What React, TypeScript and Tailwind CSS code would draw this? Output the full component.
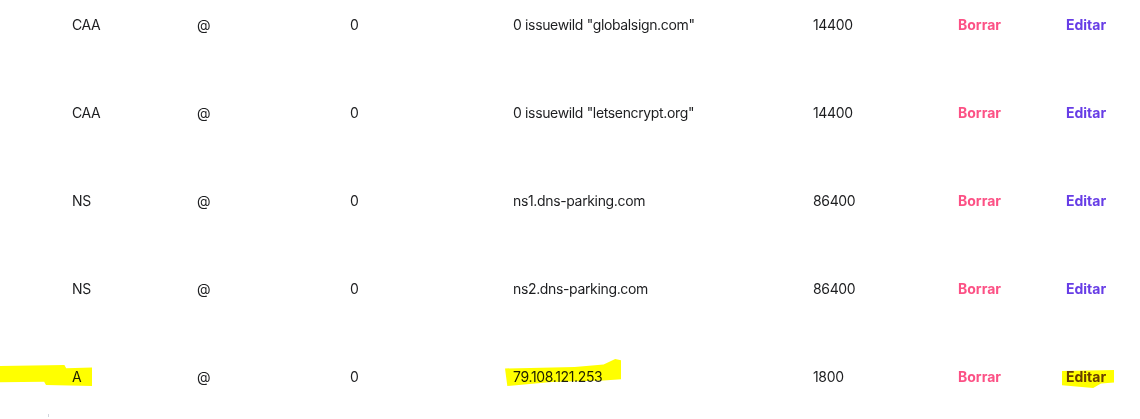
import React from "react";

type DnsRecord = {
  type: string;
  name: string;
  priority: string;
  content: string;
  ttl: string;
};

const records: DnsRecord[] = [
  { type: "CAA", name: "@", priority: "0", content: '0 issuewild "globalsign.com"', ttl: "14400" },
  { type: "CAA", name: "@", priority: "0", content: '0 issuewild "letsencrypt.org"', ttl: "14400" },
  { type: "NS", name: "@", priority: "0", content: "ns1.dns-parking.com", ttl: "86400" },
  { type: "NS", name: "@", priority: "0", content: "ns2.dns-parking.com", ttl: "86400" },
  { type: "A", name: "@", priority: "0", content: "79.108.121.253", ttl: "1800" },
];

const Marker = ({ className, points }: { className: string; points: string }) => (
  <svg className={`pointer-events-none absolute mix-blend-multiply ${className}`} viewBox="0 0 100 100" preserveAspectRatio="none">
    <polygon points={points} fill="#ffff00" />
  </svg>
);

const App = () => {
  return (
    <div className="relative h-[419px] w-[1140px] overflow-hidden bg-white font-['Inter',sans-serif] text-[14px] text-[#1d1e20]">
      <div className="-mt-[20px] flex flex-col">
        {records.map((r, i) => (
          <div
            key={i}
            className="grid h-[88px] grid-cols-[125px_153px_163px_300px_145px_108px_1fr] items-center pl-[72px] tracking-[-0.35px]"
          >
            <span>{r.type}</span>
            <span>{r.name}</span>
            <span>{r.priority}</span>
            <span>{r.content}</span>
            <span>{r.ttl}</span>
            <button className="text-left font-bold tracking-normal text-[#fc5185]">Borrar</button>
            <button className="text-left font-bold tracking-normal text-[#673de6]">Editar</button>
          </div>
        ))}
      </div>

      {/* yellow marker scribbles over the last row */}
      <Marker className="left-0 top-[365px] h-[21px] w-[92px]" points="0,5 70,0 72,15 100,12 100,100 50,95 48,80 0,82" />
      <Marker className="left-[505px] top-[359px] h-[27px] w-[116px]" points="0,35 60,30 85,20 95,0 100,5 100,75 85,80 40,85 2,100" />
      <Marker className="left-[1062px] top-[370px] h-[18px] w-[52px]" points="0,5 100,0 100,70 75,75 60,100 0,85" />

      <span className="absolute left-[48px] top-[414px] h-[3px] w-px bg-gray-300" />
    </div>
  );
};

export default App;
